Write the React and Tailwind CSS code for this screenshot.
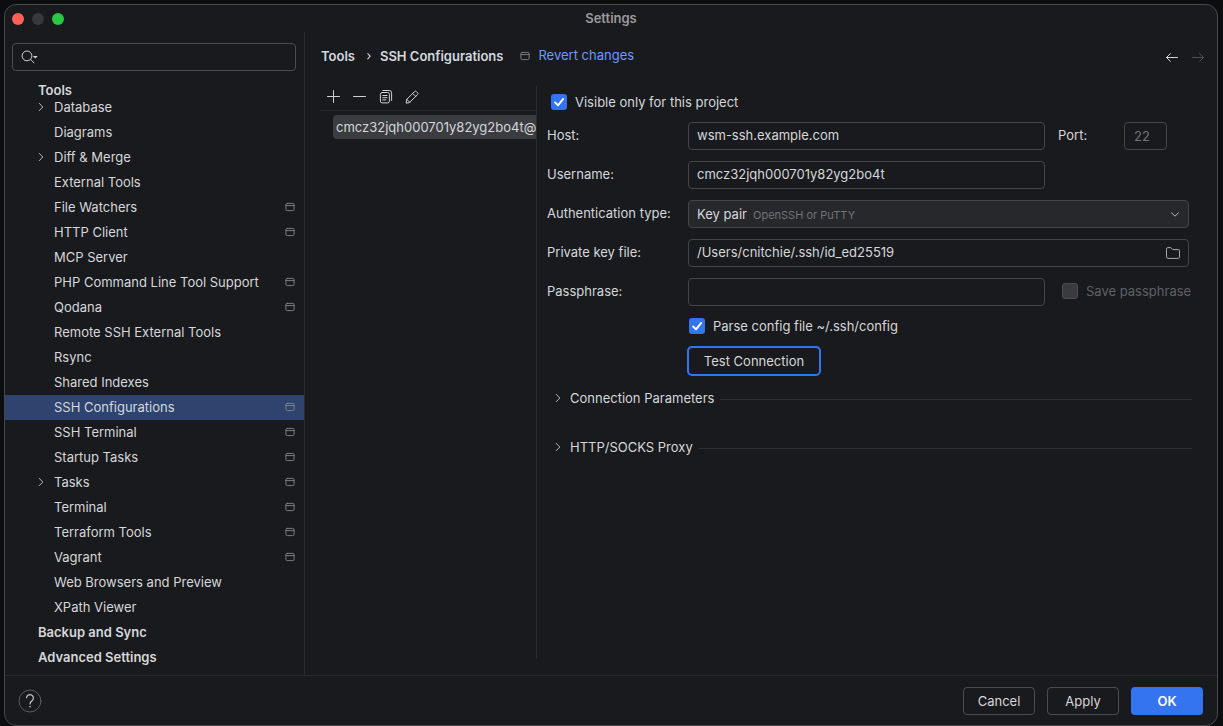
import React from 'react';

const TREE = [
  { label: 'Database', expandable: true },
  { label: 'Diagrams' },
  { label: 'Diff & Merge', expandable: true },
  { label: 'External Tools' },
  { label: 'File Watchers', project: true },
  { label: 'HTTP Client', project: true },
  { label: 'MCP Server' },
  { label: 'PHP Command Line Tool Support', project: true },
  { label: 'Qodana', project: true },
  { label: 'Remote SSH External Tools' },
  { label: 'Rsync' },
  { label: 'Shared Indexes' },
  { label: 'SSH Configurations', project: true, selected: true },
  { label: 'SSH Terminal', project: true },
  { label: 'Startup Tasks', project: true },
  { label: 'Tasks', expandable: true, project: true },
  { label: 'Terminal', project: true },
  { label: 'Terraform Tools', project: true },
  { label: 'Vagrant', project: true },
  { label: 'Web Browsers and Preview' },
  { label: 'XPath Viewer' },
];

function Icon({ size = 16, className = '', children }) {
  return (
    <svg
      width={size}
      height={size}
      viewBox={`0 0 ${size} ${size}`}
      fill="none"
      stroke="currentColor"
      strokeLinecap="round"
      strokeLinejoin="round"
      aria-hidden="true"
      className={`shrink-0 ${className}`}
    >
      {children}
    </svg>
  );
}

function ChevronRight({ className = '' }) {
  return (
    <Icon className={`text-[#b4b8bf] ${className}`}>
      <path d="M6.3 4.4 9.8 8 6.3 11.6" />
    </Icon>
  );
}

function ProjectIcon({ className }) {
  return (
    <Icon size={10} className={className}>
      <rect x="0.9" y="1.4" width="8.2" height="7.2" rx="1.4" strokeWidth="0.9" />
      <path d="M1 3.6h8" strokeWidth="0.9" />
    </Icon>
  );
}

function Sidebar() {
  return (
    <nav aria-label="Settings categories" className="flex w-[300px] shrink-0 flex-col border-r border-[#2a2b2e] pb-[5px]">
      <div className="relative mx-[7px] mt-[11px] mr-2 h-7">
        <input
          type="search"
          aria-label="Search settings"
          className="h-full w-full rounded-[4px] border border-[#4a4c50] bg-transparent pl-8 outline-none"
        />
        <svg width="20" height="16" viewBox="0 0 20 16" fill="none" stroke="#ced0d6" className="pointer-events-none absolute top-[6px] left-2" aria-hidden="true">
          <circle cx="7" cy="6.9" r="4.9" />
          <path d="M10.5 10.4 14 13.9" strokeLinecap="round" />
          <path d="M12.8 7h5l-2.5 2.4z" fill="#ced0d6" stroke="none" />
        </svg>
      </div>
      <h2 className="pt-[14px] pl-[33px] leading-[10px] font-semibold">Tools</h2>
      <ul>
        {TREE.map((n) => (
          <li key={n.label}>
            <button
              type="button"
              aria-current={n.selected ? 'page' : undefined}
              className={`flex h-[25px] w-full items-center pr-[9px] pb-[2px] pl-7 text-left ${n.selected ? 'bg-[#2e436e]' : ''}`}
            >
              <span className="w-[21px]">{n.expandable && <ChevronRight />}</span>
              <span className="flex-1">{n.label}</span>
              {n.project && <ProjectIcon className="text-[#85878c]" />}
            </button>
          </li>
        ))}
        {['Backup and Sync', 'Advanced Settings'].map((label) => (
          <li key={label}>
            <button type="button" className="flex h-[25px] w-full items-center pb-[2px] pl-[33px] font-semibold">
              {label}
            </button>
          </li>
        ))}
      </ul>
    </nav>
  );
}

function Checkbox({ id, label, ...rest }) {
  return (
    <div className="flex h-5 items-center gap-2">
      <span className="grid size-4 shrink-0 place-items-center">
        <input
          type="checkbox"
          id={id}
          className="peer col-start-1 row-start-1 size-4 appearance-none rounded-[3px] checked:bg-[#3574f0] disabled:border disabled:border-[#4a4c50] disabled:bg-[#3a3b3e]"
          {...rest}
        />
        <Icon className="pointer-events-none col-start-1 row-start-1 hidden text-white peer-checked:block">
          <path d="M4 8.4 7 11.3 12.2 4.9" strokeWidth="1.9" />
        </Icon>
      </span>
      <label htmlFor={id} className={`whitespace-nowrap ${rest.disabled ? 'text-[#5e6065]' : ''}`}>
        {label}
      </label>
    </div>
  );
}

const FIELD = 'h-7 w-full min-w-0 rounded-[4px] border border-[#43454a] bg-transparent px-2 pb-[2px] outline-none';
const LABEL = 'pb-[2px]';

function Form() {
  return (
    <form className="min-w-0 flex-1 pt-[6px] pr-[25px] pl-[10px]" onSubmit={(e) => e.preventDefault()}>
      <div className="pl-1">
        <Checkbox id="visible" label="Visible only for this project" defaultChecked />
      </div>
      <div className="mt-[10px] grid grid-cols-[141px_minmax(0,1fr)_147px] items-center gap-y-[11px]">
        <label htmlFor="host" className={LABEL}>Host:</label>
        <input id="host" className={FIELD} defaultValue="wsm-ssh.example.com" />
        <div className="flex items-center pl-[13px]">
          <label htmlFor="port" className="w-[66px] pb-[2px]">Port:</label>
          <input id="port" className="h-7 w-[43px] rounded-[4px] border border-[#43454a] bg-transparent px-[9px] text-[#6f737a] outline-none" defaultValue="22" />
        </div>

        <label htmlFor="user" className={LABEL}>Username:</label>
        <input id="user" className={FIELD} defaultValue="cmcz32jqh000701y82yg2bo4t" />
        <span />

        <label htmlFor="auth" className={LABEL}>Authentication type:</label>
        <div className="relative col-span-2 mr-[3px]">
          <select id="auth" className="block h-7 w-full appearance-none rounded-[4px] border border-[#43454a] bg-[#27282b] px-2 outline-none">
            <option>Key pair</option>
          </select>
          <span className="pointer-events-none absolute top-0 left-[65px] text-[11px] leading-[30px] text-[#6f737a]">OpenSSH or PuTTY</span>
          <Icon className="pointer-events-none absolute top-[6px] right-[6px] text-[#b4b8bf]">
            <path d="M4.5 6.8 8 10.2l3.5-3.4" />
          </Icon>
        </div>

        <label htmlFor="key" className={LABEL}>Private key file:</label>
        <div className="relative col-span-2 mr-[3px]">
          <input id="key" className={`block ${FIELD}`} defaultValue="/Users/cnitchie/.ssh/id_ed25519" />
          <button type="button" aria-label="Browse" className="absolute top-[6px] right-2 text-[#b4b8bf]">
            <Icon>
              <path d="M1.5 3.8a1.2 1.2 0 0 1 1.2-1.2h3.1l2 2h5.5a1.2 1.2 0 0 1 1.2 1.2v6.4a1.2 1.2 0 0 1-1.2 1.2H2.7a1.2 1.2 0 0 1-1.2-1.2z" strokeWidth="0.9" />
            </Icon>
          </button>
        </div>

        <label htmlFor="pass" className={LABEL}>Passphrase:</label>
        <input id="pass" type="password" className={FIELD} />
        <div className="pb-[2px] pl-[17px]">
          <Checkbox id="save" label="Save passphrase" disabled />
        </div>
      </div>
      <div className="mt-[10px] flex flex-col items-start gap-[10px] pl-[140px]">
        <div className="pl-[2px]">
          <Checkbox id="parse" label="Parse config file ~/.ssh/config" defaultChecked />
        </div>
        <button type="button" className="h-[30px] min-w-[134px] rounded-[5px] border-2 border-[#3574f0] px-[13px]">Test Connection</button>
      </div>
      <div className="mt-3 flex flex-col gap-[29px]">
        {['Connection Parameters', 'HTTP/SOCKS Proxy'].map((t) => (
          <button key={t} type="button" aria-expanded="false" className="flex h-5 w-full items-center pl-[3px]">
            <ChevronRight className="mr-1" />
            {t}
            <span className="mt-[2px] ml-[6px] h-px flex-1 bg-[#303134]" />
          </button>
        ))}
      </div>
    </form>
  );
}

function Toolbar() {
  return (
    <div className="flex h-[25px] items-center gap-[10px] border-b border-[#2a2b2e] pb-[2px] pl-[6px] text-[#ced0d6]">
      <button type="button" aria-label="Add">
        <Icon><path d="M7.5 1.5v12M1.5 7.5h12" /></Icon>
      </button>
      <button type="button" aria-label="Remove">
        <Icon><path d="M1.5 7.5h12" /></Icon>
      </button>
      <button type="button" aria-label="Copy">
        <Icon>
          <rect x="2.4" y="3.5" width="9" height="10.4" rx="1.8" />
          <path d="M4.8 1.5h6.4a2.4 2.4 0 0 1 2.4 2.4v7.6M4.8 6.5h4.2M4.8 8.7h4.2M4.8 10.9h3" />
        </Icon>
      </button>
      <button type="button" aria-label="Edit">
        <Icon>
          <path d="M2.2 13.8 2.8 10.3 10.6 2.5a1.2 1.2 0 0 1 1.7 0l1.3 1.3a1.2 1.2 0 0 1 0 1.7L5.8 13.3zM8.7 4.4l3 3M2.8 10.3l3 3" />
        </Icon>
      </button>
    </div>
  );
}

function Main() {
  return (
    <main className="flex min-w-0 flex-1 flex-col pb-4">
      <header className="flex h-12 items-center pr-[11px] pl-4">
        <span className="font-semibold">Tools</span>
        <Icon size={8} className="mr-[7px] ml-[10px]"><path d="M2.8 1.6 5.2 4.2 2.8 6.8" strokeWidth="1.1" /></Icon>
        <span className="font-semibold">SSH Configurations</span>
        <ProjectIcon className="mr-2 ml-[17px] text-[#85878c]" />
        <a href="#revert" className="pb-[2px] text-[#6b9bfa]">Revert changes</a>
        <div className="ml-auto flex gap-[10px]">
          <button type="button" aria-label="Back">
            <Icon><path d="M13.5 9.5h-11M6.4 5.6 2.5 9.5l3.9 3.9" /></Icon>
          </button>
          <button type="button" aria-label="Forward" disabled className="text-[#4e5157]">
            <Icon><path d="M2.5 9.5h11M9.6 5.6l3.9 3.9-3.9 3.9" /></Icon>
          </button>
        </div>
      </header>
      <div className="mt-[6px] flex flex-1">
        <section className="w-[232px] shrink-0 border-r border-[#2a2b2e] pl-[15px]">
          <Toolbar />
          <ul className="mt-1 pl-[13px]">
            <li className="h-6 overflow-hidden rounded-l-[4px] bg-[#3b3c3f] pl-[3px] leading-6 whitespace-nowrap">
              cmcz32jqh000701y82yg2bo4t@w
            </li>
          </ul>
        </section>
        <Form />
      </div>
    </main>
  );
}

export default function App() {
  const plain = 'h-7 w-[72px] rounded-[4px] border border-[#4a4c50]';
  return (
    <div className="flex min-h-screen flex-col bg-[#0c0d0e] pt-1 pr-[5px] pl-1 font-['Inter',sans-serif] text-[13px] leading-5 text-[#d5d7db]">
      <div className="flex flex-1 flex-col overflow-hidden rounded-[12px] border border-[#46484b] bg-[#191a1d]">
        <div className="grid h-[27px] grid-cols-[1fr_auto_1fr] items-center px-[7px]">
          <div className="flex gap-2">
            <span className="size-3 rounded-full bg-[#ff5f57]" />
            <span className="size-3 rounded-full bg-[#37383a]" />
            <span className="size-3 rounded-full bg-[#28c840]" />
          </div>
          <h1 className="pb-[2px] font-semibold text-[#9a9b9e]">Settings</h1>
        </div>
        <div className="flex flex-1">
          <Sidebar />
          <Main />
        </div>
        <footer className="flex h-[50px] items-center gap-3 border-t border-[#2a2b2e] pr-[14px] pl-[13px]">
          <button type="button" aria-label="Help" className="mr-auto">
            <Icon size={24}>
              <circle cx="12" cy="12" r="11" stroke="#5a5d63" />
              <path d="M8.6 8.8a3.4 3.4 0 1 1 5.6 2.8c-1.3 1-2.2 1.6-2.2 3.4" strokeWidth="1.1" />
              <circle cx="12" cy="17.8" r="0.8" fill="currentColor" stroke="none" />
            </Icon>
          </button>
          <button type="button" className={plain}>Cancel</button>
          <button type="button" className={plain}>Apply</button>
          <button type="button" className="h-7 w-[72px] rounded-[4px] bg-[#3574f0] font-semibold text-white">OK</button>
        </footer>
      </div>
    </div>
  );
}
